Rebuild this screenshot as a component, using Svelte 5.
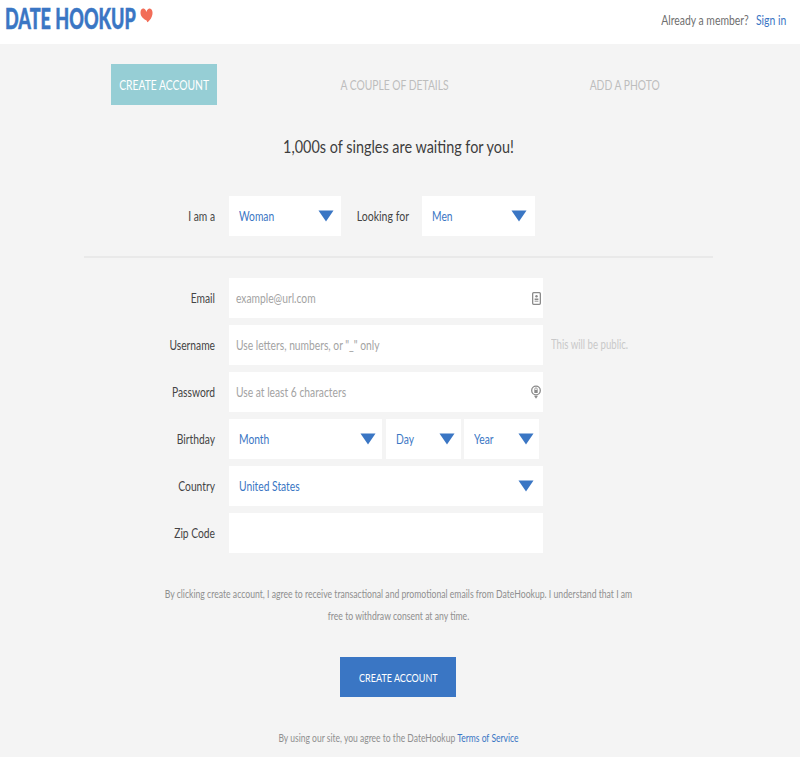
<script>
    const steps = ['CREATE ACCOUNT', 'A COUPLE OF DETAILS', 'ADD A PHOTO'];
</script>

{#snippet arrow()}
    <svg class="arrow" width="16" height="12" viewBox="0 0 16 12"><path d="M0.5 0.5h15L8 11.5z" fill="#3a76c4"/></svg>
{/snippet}

{#snippet select(value, cls)}
    <div class="select {cls}">
        <span class="txt">{value}</span>
        {@render arrow()}
    </div>
{/snippet}

<header class="topbar">
    <div class="logo">
        <span class="logo-text">DATE HOOKUP</span>
        <svg class="heart" width="13" height="15" viewBox="0 0 13 11" preserveAspectRatio="none"><path d="M6.4 3C7 1 8.800 .1 10.400 .5c1.900 .5 2.500 2.400 2 4.300-.6 2.300-2.300 4.100-4.200 5.300-.6 .4-1.100 .4-1.200-.2-.1-.7-.6-.8-1.400-1.100C3.300 7.700 .5 6.200 .5 3.300.5 1.300 2.100 .1 3.700 .4c1.400 .3 2.200 1.300 2.700 2.600z" fill="#f26d58"/></svg>
    </div>
    <div class="member">
        <span>Already a member?</span>
        <a href="#signin">Sign in</a>
    </div>
</header>

<main class="page">
    <nav class="steps">
        {#each steps as step, i}
            <div class="step" class:active={i === 0}><span>{step}</span></div>
        {/each}
    </nav>

    <h1>1,000s of singles are waiting for you!</h1>

    <div class="seeking">
        <span class="label">I am a</span>
        {@render select('Woman', 'w-gender')}
        <span class="label looking">Looking for</span>
        {@render select('Men', 'w-gender-2')}
    </div>

    <hr />

    <form class="fields">
        <span class="label">Email</span>
        <div class="input">
            <span class="txt placeholder">example@url.com</span>
            <svg class="icon" width="9" height="13" viewBox="0 0 9 13" fill="none">
                <rect x=".65" y=".65" width="7.700" height="11.700" rx="1" stroke="#8a8a8a" stroke-width="1.300"/>
                <circle cx="4.500" cy="4.300" r="1.200" fill="#8a8a8a"/>
                <rect x="2.600" y="6.500" width="3.800" height="1.800" fill="#8a8a8a"/>
                <rect x="2.600" y="9" width="3.800" height="1" fill="#b5b5b5"/>
            </svg>
        </div>

        <span class="label">Username</span>
        <div class="with-hint">
            <div class="input">
                <span class="txt placeholder">Use letters, numbers, or "_" only</span>
            </div>
            <span class="hint">This will be public.</span>
        </div>

        <span class="label">Password</span>
        <div class="input">
            <span class="txt placeholder">Use at least 6 characters</span>
            <svg class="icon" width="10" height="14" viewBox="0 0 10 14" fill="none">
                <circle cx="5" cy="5.500" r="4.300" stroke="#8a8a8a" stroke-width="1.300"/>
                <rect x="3.300" y="5" width="3.400" height="3" fill="#8a8a8a"/>
                <path d="M3.800 5V4a1.200 1.200 0 0 1 2.400 0v1" stroke="#8a8a8a" stroke-width=".8"/>
                <path d="M3 10.800h4L5 13.800z" fill="#8a8a8a"/>
            </svg>
        </div>

        <span class="label">Birthday</span>
        <div class="birthday">
            {@render select('Month', 'w-month')}
            {@render select('Day', 'w-day')}
            {@render select('Year', 'w-year')}
        </div>

        <span class="label">Country</span>
        {@render select('United States', 'w-full')}

        <span class="label">Zip Code</span>
        <div class="input"></div>
    </form>

    <p class="consent">
        By clicking create account, I agree to receive transactional and promotional emails from DateHookup. I understand that I am<br />
        free to withdraw consent at any time.
    </p>

    <button class="submit" type="button"><span>CREATE ACCOUNT</span></button>

    <p class="terms">By using our site, you agree to the DateHookup <a href="#terms">Terms of Service</a></p>
</main>

<style>
    :global(body) {
        margin: 0;
        background: #f4f4f4;
        font-family: Lato, "Open Sans", sans-serif;
        overflow: hidden;
    }

    a {
        color: #3a76c4;
        text-decoration: none;
    }

    /* top bar */
    .topbar {
        display: flex;
        justify-content: space-between;
        align-items: flex-start;
        height: 44px;
        background: #fff;
        padding: 0 14px 0 5px;
    }
    .logo {
        display: flex;
        align-items: flex-start;
        height: 36px;
    }
    .logo-text {
        font-size: 28px;
        font-weight: 900;
        line-height: 36px;
        color: #3a76c4;
        -webkit-text-stroke: 0.5px #3a76c4;
        white-space: nowrap;
        width: 135px;
        transform: scaleX(0.645);
        transform-origin: left;
    }
    .heart {
        margin-top: 8px;
    }
    .member {
        display: flex;
        gap: 9px;
        margin-top: 12px;
        font-size: 13px;
        line-height: 17px;
        color: #6f6f6f;
        transform: scaleX(0.8);
        transform-origin: right;
    }

    /* steps */
    .page {
        padding-top: 20px;
    }
    .steps {
        display: grid;
        grid-template-columns: 106px 1fr 106px;
        margin: 0 122px 0 111px;
    }
    .step {
        display: flex;
        justify-content: center;
        height: 41px;
        line-height: 41px;
        font-size: 14px;
        color: #bdbdbd;
        white-space: nowrap;
    }
    .step span {
        transform: scaleX(0.735);
    }
    .step.active {
        background: #96ced5;
        color: #fff;
    }

    h1 {
        margin: 29px 3px 0 0;
        height: 25px;
        font-size: 18px;
        font-weight: 400;
        line-height: 25px;
        text-align: center;
        color: #3d3d3d;
        transform: scaleX(0.8);
    }

    /* shared form parts */
    .label {
        font-size: 13px;
        line-height: 40px;
        color: #444;
        text-align: right;
        white-space: nowrap;
        transform: scaleX(0.79);
        transform-origin: right;
    }
    .select,
    .input {
        display: flex;
        align-items: center;
        justify-content: space-between;
        height: 40px;
        background: #fff;
        box-sizing: border-box;
        font-size: 13px;
    }
    .select {
        padding: 0 7px 0 10px;
        color: #3a76c4;
    }
    .input {
        padding: 0 2px 0 7px;
    }
    .txt {
        white-space: nowrap;
        transform: scaleX(0.79);
        transform-origin: left;
    }
    .placeholder {
        color: #a3a3a3;
    }
    .arrow {
        flex-shrink: 0;
    }

    /* seeking row */
    .seeking {
        display: flex;
        margin: 37px 0 0 176px;
    }
    .seeking .label {
        width: 39px;
        margin-right: 14px;
    }
    .seeking .label.looking {
        width: 68px;
        margin: 0 13px 0 0;
        transform: scaleX(0.81);
    }
    .w-gender {
        width: 112px;
    }
    .w-gender-2 {
        width: 113px;
        padding-right: 8px;
    }

    hr {
        margin: 20px 87px 0 84px;
        height: 2px;
        border: 0;
        background: #e9e9e9;
    }

    /* fields */
    .fields {
        display: grid;
        grid-template-columns: 131px 314px;
        grid-auto-rows: 40px;
        column-gap: 14px;
        row-gap: 7px;
        margin: 20px 0 0 84px;
    }
    .with-hint {
        position: relative;
    }
    .hint {
        position: absolute;
        left: 322px;
        top: 0;
        font-size: 12.500px;
        line-height: 40px;
        color: #c9c9c9;
        white-space: nowrap;
        transform: scaleX(0.77);
        transform-origin: left;
    }
    .birthday {
        display: flex;
    }
    .w-month {
        width: 153px;
        margin-right: 4px;
        padding-right: 6px;
    }
    .w-day {
        width: 75px;
        margin-right: 3px;
        padding-right: 6px;
    }
    .w-year {
        width: 75px;
        padding-right: 5px;
    }
    .w-full {
        padding-right: 9px;
    }

    /* footer text */
    .consent {
        margin: 30px 3px 0 0;
        font-size: 11px;
        line-height: 22px;
        text-align: center;
        color: #8f8f8f;
        white-space: nowrap;
        transform: scaleX(0.786);
    }
    .submit {
        display: block;
        width: 116px;
        height: 40px;
        margin: 30px 0 0 340px;
        padding: 0;
        border: 0;
        background: #3a76c4;
        color: #fff;
        font-family: Lato, sans-serif;
        font-size: 12px;
    }
    .submit span {
        display: inline-block;
        white-space: nowrap;
        transform: scaleX(0.75);
    }
    .terms {
        margin: 33px 3px 0 0;
        font-size: 11px;
        line-height: 16px;
        text-align: center;
        color: #8f8f8f;
        transform: scaleX(0.775);
    }
</style>
